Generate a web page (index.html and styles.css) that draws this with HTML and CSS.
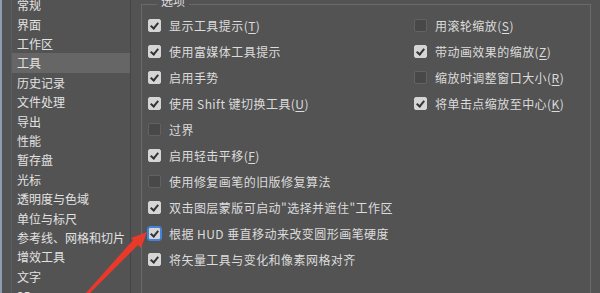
FILE: index.html
```html
<!DOCTYPE html>
<html lang="zh-CN">
<head>
  <meta charset="UTF-8">
  <meta name="viewport" content="width=device-width, initial-scale=1.0">
  <title>首选项 - 工具</title>
  <link rel="stylesheet" href="styles.css">
</head>
<body>
  <div class="window">
    <div class="edge"></div>
    <ul class="nav">
      <li>常规</li>
      <li>界面</li>
      <li>工作区</li>
      <li class="active">工具</li>
      <li>历史记录</li>
      <li>文件处理</li>
      <li>导出</li>
      <li>性能</li>
      <li>暂存盘</li>
      <li>光标</li>
      <li>透明度与色域</li>
      <li>单位与标尺</li>
      <li>参考线、网格和切片</li>
      <li>增效工具</li>
      <li>文字</li>
      <li>3D</li>
    </ul>
    <div class="group">
      <div class="group-title">选项</div>
      <div class="cols">
        <div class="col left">
          <label class="row"><span class="box on"></span>显示工具提示(<u>T</u>)</label>
          <label class="row"><span class="box on"></span>使用富媒体工具提示</label>
          <label class="row"><span class="box on"></span>启用手势</label>
          <label class="row"><span class="box on"></span>使用 Shift 键切换工具(<u>U</u>)</label>
          <label class="row"><span class="box"></span>过界</label>
          <label class="row"><span class="box on"></span>启用轻击平移(<u>F</u>)</label>
          <label class="row"><span class="box"></span>使用修复画笔的旧版修复算法</label>
          <label class="row"><span class="box on"></span>双击图层蒙版可启动"选择并遮住"工作区</label>
          <label class="row"><span class="box on focus"></span>根据 HUD 垂直移动来改变圆形画笔硬度</label>
          <label class="row"><span class="box on"></span>将矢量工具与变化和像素网格对齐</label>
        </div>
        <div class="col right">
          <label class="row"><span class="box"></span>用滚轮缩放(<u>S</u>)</label>
          <label class="row"><span class="box on"></span>带动画效果的缩放(<u>Z</u>)</label>
          <label class="row"><span class="box"></span>缩放时调整窗口大小(<u>R</u>)</label>
          <label class="row"><span class="box on"></span>将单击点缩放至中心(<u>K</u>)</label>
        </div>
      </div>
    </div>
  </div>
  <!-- 标注箭头，盖在界面上 -->
  <svg class="arrow" width="600" height="293" viewBox="0 0 600 293">
    <polygon points="85,294 89,294 139,244 134,239" fill="#e8392b"></polygon>
    <polygon points="147,232 131,238 141,248" fill="#e8392b"></polygon>
  </svg>
</body>
</html>
```

FILE: styles.css
```css
html,body {
  margin: 0;
  padding: 0;
}
body {
  width: 600px;
  height: 293px;
  overflow: hidden;
  position: relative;
  background-color: #535353;
  color: #dcdcdc;
  font-family: "Noto Sans CJK SC", "Noto Sans", sans-serif;
  font-size: 12px;
}
.window {
  display: flex;
  height: 293px;
}
.edge {
  width: 2px;
  background-color: #8e9bb0;
}
/* 左侧分类列表 */
.nav {
  list-style: none;
  margin: -4.7px 0 0 9px;
  padding: 0;
  width: 118px;
  border-left: 1px solid #5d5d5d;
  border-right: 1px solid #454545;
  color: #e2e2e2;
}
.nav li {
  height: 19.4px;
  line-height: 19.4px;
  padding-left: 5px;
  white-space: nowrap;
}
.nav .active {
  background-color: #666666;
}
/* 右侧选项分组框 */
.group {
  position: relative;
  flex: 1;
  margin: 4px 9px 0 10px;
  border: 1px solid #6a6a6a;
  border-bottom: none;
  padding: 7px 0 0 6px;
}
.group-title {
  position: absolute;
  top: -12px;
  left: 15px;
  padding: 0 4px;
  line-height: 16px;
  background-color: #535353;
}
.cols {
  display: flex;
}
.col.left {
  width: 266px;
}
.row {
  display: flex;
  align-items: center;
  height: 26.1px;
  letter-spacing: 0.45px;
  white-space: nowrap;
}
.box {
  position: relative;
  box-sizing: border-box;
  width: 13px;
  height: 13px;
  margin-right: 8px;
  border-radius: 2px;
  background-color: #484848;
  border: 1px solid #626262;
  flex: none;
}
.box.on {
  background-color: #d5d5d5;
  border-color: #d5d5d5;
}
/* 对勾用旋转的边框画出来 */
.box.on::after {
  content: '';
  position: absolute;
  left: 3px;
  top: 1px;
  width: 3px;
  height: 6px;
  border: solid #333;
  border-width: 0 2px 2px 0;
  transform: rotate(40deg);
}
.box.focus {
  outline: 1px solid #3f84de;
  outline-offset: 0;
  border-color: #3f84de;
}
u {
  text-decoration-thickness: 1px;
  text-underline-offset: 2px;
}
.arrow {
  position: absolute;
  left: 0;
  top: 0;
  pointer-events: none;
}
```
